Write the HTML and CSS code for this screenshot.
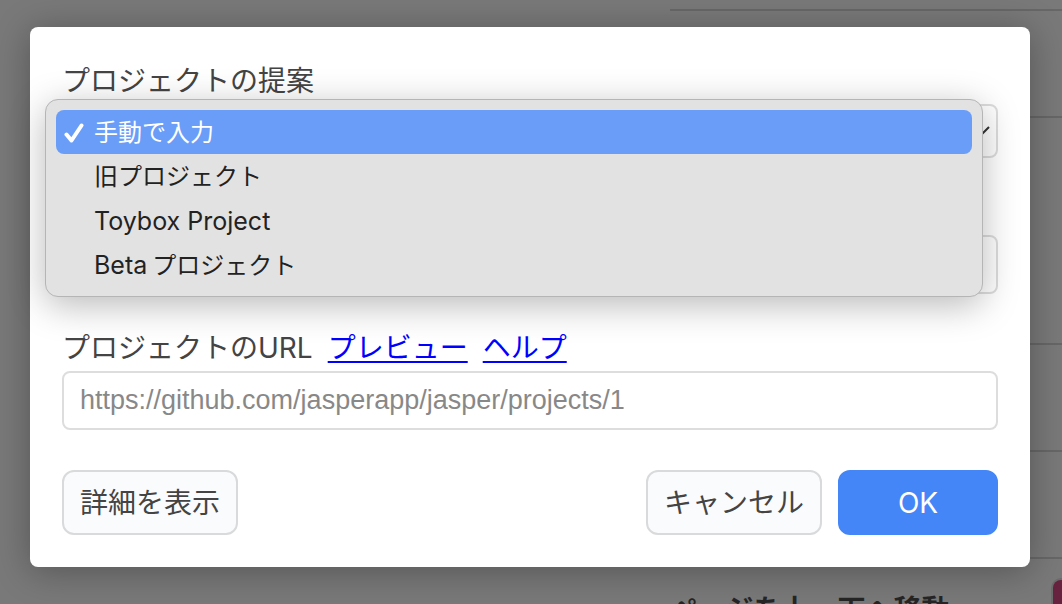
FILE: index.html
```html
<!DOCTYPE html>
<html lang="ja">
<head>
<meta charset="utf-8">
<title>プロジェクト</title>
<link rel="stylesheet" href="styles.css">
</head>
<body>
<main class="page">
  <div class="row row-first"></div>
  <div class="row"></div>
  <div class="row row-tall"></div>
  <div class="row"></div>
  <div class="row"></div>
  <div class="row row-shortcut">
    <h2 class="row-title">ページを上、下へ移動</h2>
    <span class="key"></span>
  </div>
</main>
<div class="overlay">
  <form class="dialog" role="dialog" aria-label="プロジェクト">
    <div class="field field-suggest">
      <label class="label" for="suggest">プロジェクトの提案</label>
      <div class="select-wrap">
        <select class="control select" id="suggest"></select>
        <svg class="chevron" viewBox="0 0 16 10" aria-hidden="true"><path d="M1 1l7 7 7-7"/></svg>
      </div>
      <ul class="menu" role="listbox" aria-label="プロジェクトの提案">
        <li class="option option-selected" role="option" aria-selected="true">
          <svg class="check" viewBox="0 0 20 20" aria-hidden="true"><path d="M2.500 11.500L7.500 17.500 17.500 2.500"/></svg>
          手動で入力
        </li>
        <li class="option" role="option" aria-selected="false">旧プロジェクト</li>
        <li class="option" role="option" aria-selected="false"><span class="latin">Toybox Project</span></li>
        <li class="option" role="option" aria-selected="false"><span class="latin latin-lead">Beta</span>プロジェクト</li>
      </ul>
    </div>
    <div class="field field-name">
      <input class="control input" type="text" aria-label="プロジェクト">
    </div>
    <div class="field">
      <div class="label-line">
        <label class="label" for="url">プロジェクトのURL</label>
        <a class="link" href="#preview">プレビュー</a>
        <a class="link" href="#help">ヘルプ</a>
      </div>
      <input class="control input" id="url" type="text" placeholder="https://github.com/jasperapp/jasper/projects/1">
    </div>
    <div class="actions">
      <button class="button button-detail" type="button">詳細を表示</button>
      <button class="button" type="button">キャンセル</button>
      <button class="button button-primary" type="submit">OK</button>
    </div>
  </form>
</div>
</body>
</html>
```
FILE: styles.css
```css
* {
  box-sizing: border-box;
}

body {
  margin: 0;
  height: 100vh;
  overflow: hidden;
  position: relative;
  background: #797979;
  color: #444;
  font-family: Inter, "Noto Sans CJK JP", sans-serif;
  font-size: 28px;
}

.page {
  margin-left: 670px;
}

.row {
  height: 107px;
  border-bottom: 2px solid #676767;
}

.row-first {
  height: 11px;
}

.row-tall {
  height: 227px;
}

.row-shortcut {
  display: flex;
  justify-content: space-between;
  align-items: flex-start;
  padding-top: 21px;
  border-bottom: 0;
}

.row-title {
  margin: 0;
  padding-top: 14px;
  font-size: 28px;
  line-height: 32px;
  font-weight: 700;
  color: #252525;
}

.key {
  width: 60px;
  height: 48px;
  margin-right: -51px;
  border-radius: 8px;
  background: #66223f;
  box-shadow: 0 0 0 2px #6c6c6c;
}

.overlay {
  position: absolute;
  inset: 0;
  padding: 27px 32px 37px 30px;
}

.dialog {
  padding: 32px;
  border-radius: 8px;
  background: #fff;
  box-shadow: 0 4px 36px rgba(0, 0, 0, 0.3);
}

.field {
  display: flex;
  flex-direction: column;
  gap: 1px;
  margin-bottom: 32px;
}

.field-suggest {
  position: relative;
}

.field-name {
  padding-top: 45px;
}

.label {
  line-height: 44px;
}

.label-line {
  display: flex;
  gap: 15px;
  line-height: 44px;
}

.link {
  color: #00f;
  text-decoration-thickness: 2px;
  text-underline-offset: 3px;
}

.control {
  width: 100%;
  border: 2px solid #ddd;
  border-radius: 8px;
  background: #fff;
  color: #444;
}

.select-wrap {
  display: grid;
  align-items: center;
}

.select {
  grid-area: 1 / 1;
  height: 54px;
  appearance: none;
}

.chevron {
  grid-area: 1 / 1;
  justify-self: end;
  width: 16px;
  height: 10px;
  margin-right: 8px;
  fill: none;
  stroke: #333;
  stroke-width: 2;
}

.input {
  height: 59px;
  padding: 0 16px;
  font-family: "Liberation Sans", "Noto Sans CJK JP", sans-serif;
  font-size: 27px;
}

.input::placeholder {
  color: #888;
}

.menu {
  position: absolute;
  top: 40px;
  left: -17px;
  right: 15px;
  margin: 0;
  padding: 10px;
  list-style: none;
  border: 1px solid #b5b5b5;
  border-radius: 13px;
  background: #e2e2e2;
  box-shadow: 0 8px 36px rgba(0, 0, 0, 0.28);
  color: #222;
  font-size: 24px;
}

.option {
  position: relative;
  height: 44px;
  padding-left: 38px;
  border-radius: 8px;
  line-height: 46px;
}

.option-selected {
  background: #6a9df8;
  color: #fff;
}

.check {
  position: absolute;
  top: 13px;
  left: 8px;
  width: 20px;
  height: 20px;
  fill: none;
  stroke: #fff;
  stroke-width: 4;
  stroke-linecap: round;
  stroke-linejoin: round;
}

.latin {
  font-size: 25px;
}

.latin-lead {
  margin-right: 5px;
}

.actions {
  display: flex;
  gap: 16px;
  padding-top: 8px;
}

.button {
  height: 65px;
  padding: 0 16px 3px;
  border: 2px solid #d9dadb;
  border-radius: 12px;
  background: #fafbfd;
  color: #444;
  font: inherit;
}

.button-detail {
  margin-right: auto;
}

.button-primary {
  width: 160px;
  padding-bottom: 0;
  border-color: #4486f7;
  background: #4486f7;
  color: #fff;
}
```
